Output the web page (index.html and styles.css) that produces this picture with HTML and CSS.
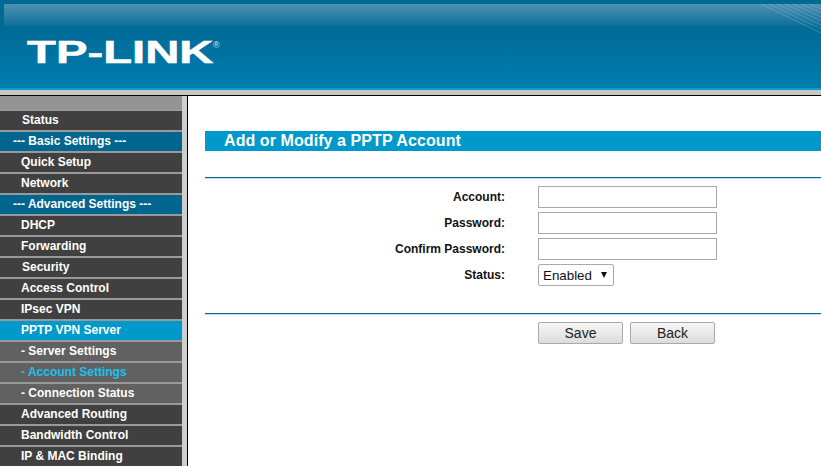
FILE: index.html
```html
<!DOCTYPE html>
<html lang="en">
<head>
<meta charset="utf-8">
<title>Add or Modify a PPTP Account</title>
<link rel="stylesheet" href="styles.css">
</head>
<body>
<header class="banner">
  <div class="gloss"></div>
  <svg class="stripes" width="60" height="34" viewBox="0 0 60 34" aria-hidden="true">
    <g stroke="#b4d2df" stroke-opacity="0.3" stroke-width="1" fill="none">
      <path d="M0 4 L60 33"/><path d="M8 4 L60 29"/><path d="M16 4 L60 25"/><path d="M24 4 L60 21"/>
      <path d="M32 4 L60 17"/><path d="M40 4 L60 13"/><path d="M48 4 L60 9"/>
    </g>
  </svg>
  <div class="logo"><span class="logo-text">TP-LINK</span></div>
  <span class="logo-reg">®</span>
</header>
<div class="band"></div>
<div class="main">
  <nav class="menu">
    <div class="menu-top"></div>
    <a class="item nudge">Status</a>
    <a class="item head">--- Basic Settings ---</a>
    <a class="item">Quick Setup</a>
    <a class="item">Network</a>
    <a class="item head">--- Advanced Settings ---</a>
    <a class="item">DHCP</a>
    <a class="item">Forwarding</a>
    <a class="item nudge">Security</a>
    <a class="item">Access Control</a>
    <a class="item">IPsec VPN</a>
    <a class="item open">PPTP VPN Server</a>
    <a class="item sub">- Server Settings</a>
    <a class="item sub current">- Account Settings</a>
    <a class="item sub">- Connection Status</a>
    <a class="item">Advanced Routing</a>
    <a class="item">Bandwidth Control</a>
    <a class="item">IP &amp; MAC Binding</a>
  </nav>
  <div class="rail"></div>
  <main class="content">
    <h1 class="title">Add or Modify a PPTP Account</h1>
    <form class="form">
      <div class="field"><label class="label" for="account">Account:</label><input class="input" id="account" type="text"></div>
      <div class="field"><label class="label" for="password">Password:</label><input class="input" id="password" type="text"></div>
      <div class="field"><label class="label" for="confirm">Confirm Password:</label><input class="input" id="confirm" type="text"></div>
      <div class="field"><label class="label" for="status">Status:</label>
        <div class="select" id="status"><span>Enabled</span><svg class="arrow" width="6" height="6" viewBox="0 0 6 6" aria-hidden="true"><path d="M0 0H6L3 6Z" fill="#111"/></svg></div>
      </div>
    </form>
    <div class="actions">
      <button class="btn" type="button">Save</button>
      <button class="btn" type="button">Back</button>
    </div>
  </main>
</div>
</body>
</html>
```
FILE: styles.css
```css
html, body {
  margin: 0;
  padding: 0;
  height: 466px;
  overflow: hidden;
  background: #fff;
  font-family: "Liberation Sans", Arial, sans-serif;
}
.banner {
  position: relative;
  height: 88px;
  overflow: hidden;
  background: linear-gradient(#006a96 0, #006a96 26px, #007db0 88px);
}
.gloss {
  height: 22px;
  margin: 4px 0 0 4px;
  background: linear-gradient(#4f92af, #0c6f9c);
}
.stripes {
  position: absolute;
  top: 0;
  right: 0;
}
.logo {
  position: absolute;
  left: 27px;
  top: 33px;
  color: #fff;
}
.logo-text {
  display: block;
  font-size: 31px;
  line-height: 40px;
  font-weight: 700;
  transform: scaleX(1.525);
  transform-origin: 0 0;
  -webkit-text-stroke: 0.5px #fff;
}
.logo-reg {
  position: absolute;
  left: 213px;
  top: 40px;
  font-size: 9px;
  line-height: 10px;
  color: #cfe4ee;
}
.band {
  height: 7px;
  background: linear-gradient(#0a9fcc 0, #0a9fcc 2px, #c8c8c8 2px, #c8c8c8 7px);
  border-bottom: 1px solid #000;
}
.main {
  display: flex;
  height: 370px;
}
.menu {
  width: 182px;
  flex: none;
  background: #999;
  display: flex;
  flex-direction: column;
  gap: 2px;
  overflow: hidden;
}
.menu-top {
  flex: none;
  height: 13px;
  background: #949494;
}
.item {
  flex: none;
  box-sizing: border-box;
  height: 19px;
  padding-left: 21px;
  background: #404040;
  color: #fff;
  font-size: 12px;
  font-weight: 700;
  line-height: 18px;
  white-space: nowrap;
}
.nudge {
  padding-left: 22px;
}
.head {
  padding-left: 13px;
  background: #006690;
}
.open {
  background: #0099cc;
}
.sub {
  background: #616161;
}
.current {
  color: #1cc0f0;
}
.rail {
  width: 5px;
  flex: none;
  background: #cdcdcd;
  border-right: 1px solid #000;
}
.content {
  flex: 1;
  min-width: 0;
  padding: 35px 0 0 17px;
}
.title {
  margin: 0;
  height: 20px;
  padding-left: 19px;
  background: #0099cc;
  color: #fff;
  font-size: 16px;
  font-weight: 700;
  line-height: 19px;
  letter-spacing: 0.08px;
}
.form {
  margin-top: 26px;
  padding: 8px 0 27px;
  border-top: 1px solid #00658f;
  border-bottom: 1px solid #00658f;
  box-shadow: 0 1px 0 #bfe0ec, inset 0 1px 0 #bfe0ec;
  display: flex;
  flex-direction: column;
  gap: 4px;
}
.field {
  display: flex;
  align-items: center;
  height: 22px;
}
.label {
  width: 300px;
  flex: none;
  margin-right: 33px;
  text-align: right;
  font-size: 12px;
  font-weight: 700;
  color: #111;
}
.input {
  box-sizing: border-box;
  width: 179px;
  height: 22px;
  margin: 0;
  padding: 0 4px;
  border: 1px solid #a9a9a9;
  background: #fff;
}
.select {
  box-sizing: border-box;
  width: 76px;
  height: 22px;
  padding: 0 6px 0 4px;
  border: 1px solid #a9a9a9;
  border-radius: 2px;
  display: flex;
  align-items: center;
  justify-content: space-between;
  font-size: 13.33px;
  color: #111;
}
.actions {
  display: flex;
  gap: 7px;
  margin-top: 8px;
  padding-left: 333px;
}
.btn {
  box-sizing: border-box;
  width: 85px;
  height: 22px;
  margin: 0;
  padding: 0;
  border: 1px solid #a9a9a9;
  border-radius: 2px;
  background: linear-gradient(#f6f6f6, #dcdcdc);
  font-family: inherit;
  font-size: 14px;
  color: #222;
}
```
